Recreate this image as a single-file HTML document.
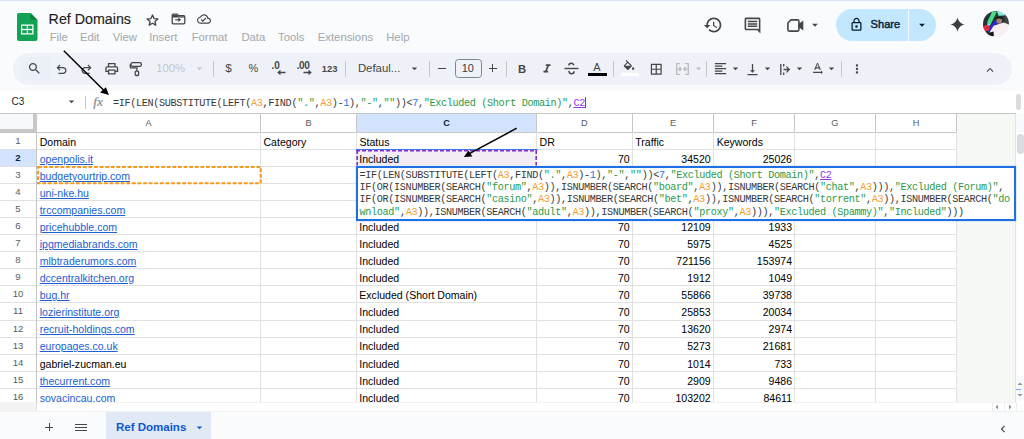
<!DOCTYPE html><html><head><meta charset="utf-8"><style>
html,body{margin:0;padding:0}
body{width:1024px;height:439px;overflow:hidden;position:relative;background:#f9fbfd;font-family:"Liberation Sans",sans-serif}
.t{position:absolute;white-space:pre}
.r{position:absolute}
.i{position:absolute;overflow:visible}
</style></head><body>
<div class="r" style="left:0px;top:0px;width:1024px;height:1px;background:#dde5f7;"></div>
<div class="r" style="left:0px;top:1px;width:1024px;height:1px;background:#f0f4fb;"></div>
<svg class="i" style="left:17px;top:13px;width:20.5px;height:28px" viewBox="0 0 41 56">
<path d="M3 0H27L41 14V52Q41 56 37 56H4Q0 56 0 52V4Q0 0 3 0Z" fill="#12a454"/>
<path d="M27 0L41 14H31Q27 14 27 10Z" fill="#0d8446"/>
<rect x="8" y="23" width="25" height="20" fill="#fff"/>
<rect x="10.5" y="25.5" width="9" height="6.2" fill="#12a454"/>
<rect x="21.5" y="25.5" width="9" height="6.2" fill="#12a454"/>
<rect x="10.5" y="34.3" width="9" height="6.2" fill="#12a454"/>
<rect x="21.5" y="34.3" width="9" height="6.2" fill="#12a454"/>
</svg>
<div class="t" style="left:48.60px;top:12.04px;font-size:14.25px;line-height:14.25px;color:#1f1f1f;font-weight:400;font-family:'Liberation Sans', sans-serif;-webkit-text-stroke:0.15px #1f1f1f">Ref Domains</div>
<svg class="i" style="left:146.4px;top:13.6px;width:13px;height:12.5px" viewBox="0 0 13 12.5"><path d="M6.50 1.0 L8.05 4.55 L11.85 4.9 L8.95 7.45 L9.8 11.2 L6.50 9.25 L3.2 11.2 L4.05 7.45 L1.15 4.9 L4.95 4.55Z" fill="none" stroke="#444746" stroke-width="1.35" stroke-linejoin="round"/></svg>
<svg class="i" style="left:172px;top:14.2px;width:13px;height:10px" viewBox="0 0 13 10"><path d="M1.3 0.2H5.2L6.6 1.6H11.8Q12.8 1.6 12.8 2.6V8.7Q12.8 9.8 11.7 9.8H1.3Q0.2 9.8 0.2 8.7V1.3Q0.2 0.2 1.3 0.2Z" fill="none" stroke="#444746" stroke-width="1.3"/><path d="M0.5 0.8H5L6.3 2.3H12.5V3.4H0.5Z" fill="#444746"/><path d="M3.3 5.2H6.8V6.4H3.3Z" fill="#444746"/><path d="M6.3 3.6L9.2 5.8L6.3 8Z" fill="#444746"/></svg>
<svg class="i" style="left:197.00px;top:12.40px;width:14px;height:14px" viewBox="0 0 24 24" fill="#444746"><path d="M19.35 10.04C18.67 6.59 15.64 4 12 4 9.11 4 6.6 5.64 5.35 8.04 2.34 8.36 0 10.910 0 14c0 3.31 2.69 6 6 6h13c2.76 0 5-2.24 5-5 0-2.64-2.05-4.780-4.65-4.96zM19 18H6c-2.21 0-4-1.79-4-4 0-2.05 1.53-3.76 3.56-3.97l1.07-.11.5-.95C8.08 7.14 9.94 6 12 6c2.62 0 4.88 1.86 5.39 4.430l.3 1.5 1.53.11c1.56.1 2.78 1.41 2.78 2.96 0 1.65-1.350 3-3 3zm-9-3.82l-2.09-2.09L6.5 13.5 10 17l6.01-6.01-1.41-1.41z" /></svg>
<div class="t" style="left:49.70px;top:31.53px;font-size:11.3px;line-height:11.3px;color:#a3a7ab;font-weight:400;font-family:'Liberation Sans', sans-serif;">File</div>
<div class="t" style="left:80.00px;top:31.53px;font-size:11.3px;line-height:11.3px;color:#a3a7ab;font-weight:400;font-family:'Liberation Sans', sans-serif;">Edit</div>
<div class="t" style="left:112.70px;top:31.53px;font-size:11.3px;line-height:11.3px;color:#a3a7ab;font-weight:400;font-family:'Liberation Sans', sans-serif;">View</div>
<div class="t" style="left:149.20px;top:31.53px;font-size:11.3px;line-height:11.3px;color:#a3a7ab;font-weight:400;font-family:'Liberation Sans', sans-serif;">Insert</div>
<div class="t" style="left:191.70px;top:31.53px;font-size:11.3px;line-height:11.3px;color:#a3a7ab;font-weight:400;font-family:'Liberation Sans', sans-serif;">Format</div>
<div class="t" style="left:241.40px;top:31.53px;font-size:11.3px;line-height:11.3px;color:#a3a7ab;font-weight:400;font-family:'Liberation Sans', sans-serif;">Data</div>
<div class="t" style="left:278.00px;top:31.53px;font-size:11.3px;line-height:11.3px;color:#a3a7ab;font-weight:400;font-family:'Liberation Sans', sans-serif;">Tools</div>
<div class="t" style="left:317.80px;top:31.53px;font-size:11.3px;line-height:11.3px;color:#a3a7ab;font-weight:400;font-family:'Liberation Sans', sans-serif;">Extensions</div>
<div class="t" style="left:386.20px;top:31.53px;font-size:11.3px;line-height:11.3px;color:#a3a7ab;font-weight:400;font-family:'Liberation Sans', sans-serif;">Help</div>
<svg class="i" style="left:702.70px;top:14.50px;width:20px;height:20px" viewBox="0 0 24 24" fill="#444746"><path d="M13 3c-4.97 0-9 4.03-9 9H1l3.89 3.89.07.14L9 12H6c0-3.87 3.13-7 7-7s7 3.13 7 7-3.13 7-7 7c-1.93 0-3.68-.79-4.94-2.06l-1.42 1.42C8.27 19.99 10.51 21 13 21c4.97 0 9-4.03 9-9s-4.03-9-9-9zm-1 5v5l4.28 2.54.72-1.21-3.5-2.08V8H12z" /></svg>
<svg class="i" style="left:742.70px;top:16.00px;width:19px;height:19px" viewBox="0 0 24 24" fill="#444746"><path d="M21.99 4c0-1.1-.89-2-1.99-2H4c-1.1 0-2 .9-2 2v12c0 1.1.9 2 2 2h14l4 4-.01-18zM20 4v13.17L18.83 16H4V4h16zM6 12h12v2H6zm0-3h12v2H6zm0-3h12v2H6z" /></svg>
<svg class="i" style="left:786.5px;top:18.5px;width:17px;height:13px" viewBox="0 0 17 13"><path d="M4 0.9H10.6Q11.9 0.9 11.9 2.2V10.8Q11.9 12.1 10.6 12.1H2.2Q0.9 12.1 0.9 10.8V4Z" fill="none" stroke="#444746" stroke-width="1.6" stroke-linejoin="round"/><path d="M11.5 5L16.3 1.5V11.5L11.5 8Z" fill="#444746"/></svg>
<svg class="i" style="left:807.80px;top:17.80px;width:14px;height:14px" viewBox="0 0 24 24" fill="#444746"><path d="M7 10l5 5 5-5z" /></svg>
<div class="r" style="left:836px;top:8.5px;width:99.5px;height:32px;border-radius:16px;background:#c2e7ff"></div>
<div class="r" style="left:908.3px;top:8.5px;width:1px;height:32px;background:#f2f9ff;"></div>
<svg class="i" style="left:849.10px;top:16.70px;width:15px;height:15px" viewBox="0 0 24 24" fill="#001d35"><path d="M18 8h-1V6c0-2.76-2.24-5-5-5S7 3.24 7 6v2H6c-1.1 0-2 .9-2 2v10c0 1.1.9 2 2 2h12c1.1 0 2-.9 2-2V10c0-1.1-.9-2-2-2zM9 6c0-1.66 1.34-3 3-3s3 1.34 3 3v2H9V6zm9 14H6V10h12v10zm-6-3c1.1 0 2-.9 2-2s-.9-2-2-2-2 .9-2 2 .9 2 2 2z" /></svg>
<div class="t" style="left:870.60px;top:19.40px;font-size:11.1px;line-height:11.1px;color:#0a2540;font-weight:400;font-family:'Liberation Sans', sans-serif;-webkit-text-stroke:0.45px #0a2540">Share</div>
<svg class="i" style="left:915.00px;top:17.80px;width:14px;height:14px" viewBox="0 0 24 24" fill="#001d35"><path d="M7 10l5 5 5-5z" /></svg>
<svg class="i" style="left:949.40px;top:15.80px;width:17px;height:17px" viewBox="0 0 24 24" fill="#3d3f42"><path d="M12 1.5C12.6 7 17 11.4 22.5 12 17 12.6 12.6 17 12 22.5 11.4 17 7 12.6 1.5 12 7 11.4 11.4 7 12 1.5Z" /></svg>
<svg class="i" style="left:983.3px;top:11.3px;width:26px;height:26px" viewBox="0 0 26 26">
<defs><clipPath id="av"><circle cx="13" cy="13" r="13"/></clipPath><filter id="bl"><feGaussianBlur stdDeviation="0.45"/></filter></defs>
<g clip-path="url(#av)"><g filter="url(#bl)">
<rect x="-2" y="-2" width="30" height="30" fill="#263030"/>
<path d="M9.2 0.6 L14 0.6 L7.4 14 L4 11.5Z" fill="#48dc86"/>
<path d="M14 0 L21 0.5 L22 4.5 L15.5 4.8Z" fill="#86ecd8"/>
<path d="M12.3 8.8 L15.4 11 L8 21 L3.2 20.2Z" fill="#2b2bd6"/>
<path d="M5 11.5 L7.2 13.6 L4.3 18.4 L3 17Z" fill="#9fd8ff"/>
<rect x="21.5" y="5" width="6" height="12" fill="#3f4244"/>
<circle cx="3.6" cy="17" r="3.1" fill="#e42a3a"/>
<ellipse cx="16.2" cy="9.2" rx="2.8" ry="3.5" fill="#a98068"/>
<path d="M13.2 6.8 Q16 4.2 19.3 6.6 L19 8.3 Q16.2 6.8 13.5 8.6Z" fill="#1a1a1a"/>
<path d="M10.6 14.8 L20.8 11.4 L27 14 L27 27 L8 27 L6.8 21Z" fill="#f8eff3"/>
<path d="M7 21.4 L10.6 20.6 L10.8 25.5 L6.8 24.6Z" fill="#12141a"/>
</g></g></svg>
<div class="r" style="left:12.8px;top:52.6px;width:999px;height:32.2px;border-radius:16px;background:#eef2f8"></div>
<div class="r" style="left:20.5px;top:56.6px;width:29.7px;height:23px;background:#eaeff8;border-radius:2px"></div>
<svg class="i" style="left:27.30px;top:61.00px;width:15px;height:15px" viewBox="0 0 24 24" fill="#444746"><path d="M15.5 14h-.79l-.28-.27C15.41 12.59 16 11.11 16 9.5 16 5.91 13.09 3 9.5 3S3 5.91 3 9.5 5.91 16 9.5 16c1.61 0 3.09-.59 4.23-1.57l.27.28v.79l5 4.99L20.49 19l-4.99-5zm-6 0C7.01 14 5 11.99 5 9.5S7.01 5 9.5 5 14 7.01 14 9.5 11.99 14 9.5 14z" /></svg>
<svg class="i" style="left:54.00px;top:61.90px;width:15px;height:15px" viewBox="0 -960 960 960" fill="#444746"><path d="M280-200v-80h284q63 0 109.5-40T720-420q0-60-46.5-100T564-560H312l104 104-56 56-200-200 200-200 56 56-104 104h252q97 0 166.5 63T800-420q0 94-69.5 157T564-200H280Z" /></svg>
<svg class="i" style="left:79px;top:61.9px;width:15px;height:15px" viewBox="0 -960 960 960" fill="#444746"><g transform="translate(960 0) scale(-1 1)"><path d="M280-200v-80h284q63 0 109.5-40T720-420q0-60-46.5-100T564-560H312l104 104-56 56-200-200 200-200 56 56-104 104h252q97 0 166.5 63T800-420q0 94-69.5 157T564-200H280Z"/></g></svg>
<svg class="i" style="left:103.75px;top:60.75px;width:15.5px;height:15.5px" viewBox="0 0 24 24" fill="#444746"><path d="M19 8h-1V3H6v5H5c-1.66 0-3 1.34-3 3v6h4v4h12v-4h4v-6c0-1.66-1.34-3-3-3zM8 5h8v3H8V5zm8 12v2H8v-4h8v2zm2-2v-2H6v2H4v-4c0-.55.45-1 1-1h14c.55 0 1 .45 1 1v4h-2z" /></svg>
<svg class="i" style="left:128px;top:60px;width:16px;height:18px" viewBox="0 0 16 18" fill="none" stroke="#444746" stroke-width="1.3"><rect x="3" y="2.7" width="10.4" height="3.6" rx="1.6"/><path d="M3 4.5H2.6Q2.3 4.5 2.3 5V7.2Q2.3 7.8 2.9 7.8H8.9V11"/><rect x="7.2" y="11.1" width="3.4" height="4.4" rx="1"/></svg>
<div class="t" style="left:156.20px;top:63.33px;font-size:11.3px;line-height:11.3px;color:#c2c5c8;font-weight:400;font-family:'Liberation Sans', sans-serif;">100%</div>
<svg class="i" style="left:193.00px;top:61.80px;width:13px;height:13px" viewBox="0 0 24 24" fill="#c2c5c8"><path d="M7 10l5 5 5-5z" /></svg>
<div class="r" style="left:213.1px;top:61px;width:1px;height:15.5px;background:#c7c9cc;"></div>
<div class="r" style="left:345.0px;top:61px;width:1px;height:15.5px;background:#c7c9cc;"></div>
<div class="r" style="left:429.0px;top:61px;width:1px;height:15.5px;background:#c7c9cc;"></div>
<div class="r" style="left:506.3px;top:61px;width:1px;height:15.5px;background:#c7c9cc;"></div>
<div class="r" style="left:613.2px;top:61px;width:1px;height:15.5px;background:#c7c9cc;"></div>
<div class="r" style="left:705.9px;top:61px;width:1px;height:15.5px;background:#c7c9cc;"></div>
<div class="r" style="left:840.8px;top:61px;width:1px;height:15.5px;background:#c7c9cc;"></div>
<div class="t" style="left:225.20px;top:62.61px;font-size:11.8px;line-height:11.8px;color:#444746;font-weight:400;font-family:'Liberation Sans', sans-serif;">$</div>
<div class="t" style="left:248.60px;top:63.29px;font-size:11.0px;line-height:11.0px;color:#444746;font-weight:400;font-family:'Liberation Sans', sans-serif;">%</div>
<div class="t" style="left:271.60px;top:61.13px;font-size:10.0px;line-height:10.0px;color:#444746;font-weight:700;font-family:'Liberation Sans', sans-serif;">.0</div>
<svg class="i" style="left:277px;top:70.3px;width:9px;height:5px" viewBox="0 0 9 5"><path d="M8.5 2.5H1.5M3.5 0.5L1.2 2.5 3.5 4.5" stroke="#444746" stroke-width="1.3" fill="none"/></svg>
<div class="t" style="left:296.80px;top:61.13px;font-size:10.0px;line-height:10.0px;color:#444746;font-weight:700;font-family:'Liberation Sans', sans-serif;letter-spacing:-0.5px">.00</div>
<svg class="i" style="left:302.5px;top:70.3px;width:9px;height:5px" viewBox="0 0 9 5"><path d="M0.5 2.5H7.5M5.5 0.5L7.8 2.5 5.5 4.5" stroke="#444746" stroke-width="1.3" fill="none"/></svg>
<div class="t" style="left:321.80px;top:64.04px;font-size:9.4px;line-height:9.4px;color:#444746;font-weight:700;font-family:'Liberation Sans', sans-serif;">123</div>
<div class="t" style="left:357.90px;top:63.05px;font-size:11.4px;line-height:11.4px;color:#444746;font-weight:400;font-family:'Liberation Sans', sans-serif;">Defaul...</div>
<svg class="i" style="left:408.40px;top:61.80px;width:13px;height:13px" viewBox="0 0 24 24" fill="#444746"><path d="M7 10l5 5 5-5z" /></svg>
<div class="r" style="left:438px;top:67.6px;width:8.3px;height:1.3px;background:#444746;"></div>
<div class="r" style="left:455px;top:59.4px;width:24.6px;height:16.8px;border:1px solid #80868b;border-radius:3.5px"></div>
<div class="t" style="left:267.80px;width:400px;text-align:center;top:62.89px;font-size:11.0px;line-height:11.0px;color:#3c4043;font-weight:400;font-family:'Liberation Sans', sans-serif;">10</div>
<div class="r" style="left:488.7px;top:67.6px;width:8.3px;height:1.3px;background:#444746;"></div>
<div class="r" style="left:492.2px;top:64.1px;width:1.3px;height:8.3px;background:#444746;"></div>
<div class="t" style="left:518.00px;top:63.62px;font-size:11.2px;line-height:11.2px;color:#444746;font-weight:700;font-family:'Liberation Sans', sans-serif;">B</div>
<svg class="i" style="left:539.70px;top:61.50px;width:14px;height:14px" viewBox="0 0 24 24" fill="#444746"><path d="M10 4v3h2.21l-3.42 8H6v3h8v-3h-2.21l3.42-8H18V4z" /></svg>
<svg class="i" style="left:564px;top:62px;width:15px;height:13px" viewBox="0 0 15 13" fill="none" stroke="#444746" stroke-width="1.4">
<path d="M0.5 6.5H14.5"/><path d="M10 3.2Q9 1.2 7.4 1.2 4.8 1.2 4.8 3.4"/><path d="M4.8 8.8Q5.3 11.8 7.5 11.8 10.2 11.8 10.2 9.3"/></svg>
<div class="t" style="left:593.20px;top:61.89px;font-size:11.0px;line-height:11.0px;color:#444746;font-weight:400;font-family:'Liberation Sans', sans-serif;">A</div>
<div class="r" style="left:588.3px;top:73.1px;width:18.7px;height:2.9px;background:#000000;"></div>
<svg class="i" style="left:621.50px;top:60.30px;width:14px;height:14px" viewBox="0 0 24 24" fill="#444746"><path d="M16.56 8.94L7.62 0 6.21 1.41l2.38 2.38-5.15 5.15c-.59.59-.59 1.54 0 2.12l5.5 5.5c.29.29.68.44 1.06.44s.77-.15 1.06-.44l5.5-5.5c.59-.58.59-1.53 0-2.12zM5.21 10L10 5.21 14.79 10H5.21zM19 11.5s-2 2.17-2 3.5c0 1.1.9 2 2 2s2-.9 2-2c0-1.33-2-3.5-2-3.5z" /></svg>
<div class="r" style="left:620.5px;top:73.1px;width:18.5px;height:2.9px;background:#ffffff;"></div>
<svg class="i" style="left:648.75px;top:61.55px;width:14.5px;height:14.5px" viewBox="0 0 24 24" fill="#444746"><path d="M3 3v18h18V3H3zm8 16H5v-6h6v6zm0-8H5V5h6v6zm8 8h-6v-6h6v6zm0-8h-6V5h6v6z" /></svg>
<svg class="i" style="left:675.5px;top:63px;width:13px;height:12px" viewBox="0 0 13 12" fill="none" stroke="#b9bcbe" stroke-width="1.3">
<path d="M4 0.7H0.7V11.3H4M9 0.7H12.3V11.3H9"/><path d="M1.5 6H5M3.5 4L5.2 6 3.5 8M11.5 6H8M9.5 4L7.8 6 9.5 8"/></svg>
<svg class="i" style="left:692.00px;top:61.80px;width:13px;height:13px" viewBox="0 0 24 24" fill="#b9bcbe"><path d="M7 10l5 5 5-5z" /></svg>
<svg class="i" style="left:712.50px;top:61.40px;width:15px;height:15px" viewBox="0 0 24 24" fill="#444746"><path d="M15 15H3v2h12v-2zm0-8H3v2h12V7zM3 13h18v-2H3v2zm0 8h18v-2H3v2zM3 3v2h18V3H3z" /></svg>
<svg class="i" style="left:728.50px;top:61.80px;width:13px;height:13px" viewBox="0 0 24 24" fill="#444746"><path d="M7 10l5 5 5-5z" /></svg>
<svg class="i" style="left:745.30px;top:62.00px;width:15px;height:15px" viewBox="0 0 24 24" fill="#444746"><path d="M16 13h-3V3h-2v10H8l4 4 4-4zM4 19v2h16v-2H4z" /></svg>
<svg class="i" style="left:760.50px;top:61.80px;width:13px;height:13px" viewBox="0 0 24 24" fill="#444746"><path d="M7 10l5 5 5-5z" /></svg>
<svg class="i" style="left:779.5px;top:63.5px;width:10px;height:11px" viewBox="0 0 10 11" fill="none" stroke="#444746" stroke-width="1.3">
<path d="M0.8 0V11M3.5 5.5H9.2M6.5 2.6L9.3 5.5 6.5 8.4M3.7 0V2.5M3.7 8.5V11"/></svg>
<svg class="i" style="left:793.10px;top:61.80px;width:13px;height:13px" viewBox="0 0 24 24" fill="#444746"><path d="M7 10l5 5 5-5z" /></svg>
<svg class="i" style="left:810.20px;top:61.40px;width:15px;height:15px" viewBox="0 0 24 24" fill="#444746"><path d="M12.75 3h-1.5L6.5 14h2.1l.9-2.2h5l.9 2.2h2.1L12.75 3zm-2.62 7L12 4.98 13.87 10h-3.74zm10.37 8l-3-3v2H5v2h12.5v2l3-3z" /></svg>
<svg class="i" style="left:825.20px;top:61.80px;width:13px;height:13px" viewBox="0 0 24 24" fill="#444746"><path d="M7 10l5 5 5-5z" /></svg>
<svg class="i" style="left:849.70px;top:61.60px;width:14px;height:14px" viewBox="0 0 24 24" fill="#444746"><path d="M12 8c1.1 0 2-.9 2-2s-.9-2-2-2-2 .9-2 2 .9 2 2 2zm0 2c-1.1 0-2 .9-2 2s.9 2 2 2 2-.9 2-2-.9-2-2-2zm0 6c-1.1 0-2 .9-2 2s.9 2 2 2 2-.9 2-2-.9-2-2-2z" /></svg>
<svg class="i" style="left:983.20px;top:62.50px;width:14px;height:14px" viewBox="0 0 24 24" fill="#444746"><path d="M12 8l-6 6 1.41 1.41L12 10.83l4.59 4.58L18 14z" /></svg>
<div class="r" style="left:0px;top:91px;width:1024px;height:22px;background:#ffffff;"></div>
<div class="t" style="left:11.40px;top:97.05px;font-size:10.1px;line-height:10.1px;color:#1f1f1f;font-weight:400;font-family:'Liberation Sans', sans-serif;">C3</div>
<svg class="i" style="left:65.40px;top:95.30px;width:13px;height:13px" viewBox="0 0 24 24" fill="#444746"><path d="M7 10l5 5 5-5z" /></svg>
<div class="r" style="left:84.5px;top:96.3px;width:1px;height:12.7px;background:#c7c9cc;"></div>
<div class="t" style="left:93.30px;top:95.17px;font-size:13.5px;line-height:13.5px;color:#85898d;font-weight:400;font-family:'Liberation Serif', serif;-webkit-text-stroke:0.2px #85898d;font-style:italic">fx</div>
<div class="r" style="left:1016px;top:94.4px;width:5px;height:16px;border-radius:3px;background:#dadce0"></div>
<div class="t" style="left:113.00px;top:98.68px;font-size:10.2px;line-height:10.2px;color:#37393b;font-weight:400;font-family:'Liberation Mono', monospace;letter-spacing:-0.360px"><span style="color:#37393b">=IF(LEN(SUBSTITUTE(LEFT(</span><span style="color:#f59e31">A3</span><span style="color:#37393b">,FIND(</span><span style="color:#2a9a48">"."</span><span style="color:#37393b">,</span><span style="color:#f59e31">A3</span><span style="color:#37393b">)-</span><span style="color:#1a73e8">1</span><span style="color:#37393b">),</span><span style="color:#2a9a48">"-"</span><span style="color:#37393b">,</span><span style="color:#2a9a48">""</span><span style="color:#37393b">))&lt;</span><span style="color:#1a73e8">7</span><span style="color:#37393b">,</span><span style="color:#2a9a48">"Excluded (Short Domain)"</span><span style="color:#37393b">,</span><span style="color:#9334e6;text-decoration:underline">C2</span></div>
<div class="r" style="left:585px;top:97px;width:1px;height:11px;background:#7a2fc0;"></div>
<div class="r" style="left:0px;top:113px;width:1016px;height:289px;background:#ffffff;"></div>
<div class="r" style="left:956.5px;top:113px;width:58.5px;height:289px;background:#f6f8f6;"></div>
<div class="r" style="left:1015px;top:113px;width:1px;height:289px;background:#e3e3e3;"></div>
<div class="r" style="left:1016.5px;top:113px;width:7.5px;height:299px;background:#ffffff;"></div>
<div class="r" style="left:1016.5px;top:113px;width:7.5px;height:19px;background:#f8f9fa;"></div>
<div class="r" style="left:0px;top:113px;width:36.5px;height:19px;background:#f8f9fa;"></div>
<div class="r" style="left:356.5px;top:113px;width:180px;height:19px;background:#d3e3fd;"></div>
<div class="r" style="left:0px;top:149.35000000000002px;width:36.5px;height:17.07px;background:#d3e3fd;"></div>
<div class="t" style="left:-51.50px;width:400px;text-align:center;top:118.61px;font-size:9.2px;line-height:9.2px;color:#575b5f;font-weight:400;font-family:'Liberation Sans', sans-serif;">A</div>
<div class="t" style="left:108.50px;width:400px;text-align:center;top:118.61px;font-size:9.2px;line-height:9.2px;color:#575b5f;font-weight:400;font-family:'Liberation Sans', sans-serif;">B</div>
<div class="t" style="left:246.55px;width:400px;text-align:center;top:118.61px;font-size:9.2px;line-height:9.2px;color:#041e49;font-weight:700;font-family:'Liberation Sans', sans-serif;">C</div>
<div class="t" style="left:384.45px;width:400px;text-align:center;top:118.61px;font-size:9.2px;line-height:9.2px;color:#575b5f;font-weight:400;font-family:'Liberation Sans', sans-serif;">D</div>
<div class="t" style="left:473.00px;width:400px;text-align:center;top:118.61px;font-size:9.2px;line-height:9.2px;color:#575b5f;font-weight:400;font-family:'Liberation Sans', sans-serif;">E</div>
<div class="t" style="left:554.05px;width:400px;text-align:center;top:118.61px;font-size:9.2px;line-height:9.2px;color:#575b5f;font-weight:400;font-family:'Liberation Sans', sans-serif;">F</div>
<div class="t" style="left:634.95px;width:400px;text-align:center;top:118.61px;font-size:9.2px;line-height:9.2px;color:#575b5f;font-weight:400;font-family:'Liberation Sans', sans-serif;">G</div>
<div class="t" style="left:716.05px;width:400px;text-align:center;top:118.61px;font-size:9.2px;line-height:9.2px;color:#575b5f;font-weight:400;font-family:'Liberation Sans', sans-serif;">H</div>
<div class="r" style="left:0px;top:113px;width:1016px;height:1px;background:#c4c7c5;"></div>
<div class="r" style="left:0px;top:132px;width:956.6px;height:1px;background:#c4c7c5;"></div>
<div class="r" style="left:36.5px;top:149px;width:920px;height:1px;background:#e1e1e1;"></div>
<div class="r" style="left:0px;top:149px;width:36.5px;height:1px;background:#e1e1e1;"></div>
<div class="r" style="left:36.5px;top:166px;width:920px;height:1px;background:#e1e1e1;"></div>
<div class="r" style="left:0px;top:166px;width:36.5px;height:1px;background:#e1e1e1;"></div>
<div class="r" style="left:36.5px;top:183px;width:920px;height:1px;background:#e1e1e1;"></div>
<div class="r" style="left:0px;top:183px;width:36.5px;height:1px;background:#e1e1e1;"></div>
<div class="r" style="left:36.5px;top:200px;width:920px;height:1px;background:#e1e1e1;"></div>
<div class="r" style="left:0px;top:200px;width:36.5px;height:1px;background:#e1e1e1;"></div>
<div class="r" style="left:36.5px;top:217px;width:920px;height:1px;background:#e1e1e1;"></div>
<div class="r" style="left:0px;top:217px;width:36.5px;height:1px;background:#e1e1e1;"></div>
<div class="r" style="left:36.5px;top:234px;width:920px;height:1px;background:#e1e1e1;"></div>
<div class="r" style="left:0px;top:234px;width:36.5px;height:1px;background:#e1e1e1;"></div>
<div class="r" style="left:36.5px;top:251px;width:920px;height:1px;background:#e1e1e1;"></div>
<div class="r" style="left:0px;top:251px;width:36.5px;height:1px;background:#e1e1e1;"></div>
<div class="r" style="left:36.5px;top:268px;width:920px;height:1px;background:#e1e1e1;"></div>
<div class="r" style="left:0px;top:268px;width:36.5px;height:1px;background:#e1e1e1;"></div>
<div class="r" style="left:36.5px;top:285px;width:920px;height:1px;background:#e1e1e1;"></div>
<div class="r" style="left:0px;top:285px;width:36.5px;height:1px;background:#e1e1e1;"></div>
<div class="r" style="left:36.5px;top:302px;width:920px;height:1px;background:#e1e1e1;"></div>
<div class="r" style="left:0px;top:302px;width:36.5px;height:1px;background:#e1e1e1;"></div>
<div class="r" style="left:36.5px;top:320px;width:920px;height:1px;background:#e1e1e1;"></div>
<div class="r" style="left:0px;top:320px;width:36.5px;height:1px;background:#e1e1e1;"></div>
<div class="r" style="left:36.5px;top:337px;width:920px;height:1px;background:#e1e1e1;"></div>
<div class="r" style="left:0px;top:337px;width:36.5px;height:1px;background:#e1e1e1;"></div>
<div class="r" style="left:36.5px;top:354px;width:920px;height:1px;background:#e1e1e1;"></div>
<div class="r" style="left:0px;top:354px;width:36.5px;height:1px;background:#e1e1e1;"></div>
<div class="r" style="left:36.5px;top:371px;width:920px;height:1px;background:#e1e1e1;"></div>
<div class="r" style="left:0px;top:371px;width:36.5px;height:1px;background:#e1e1e1;"></div>
<div class="r" style="left:36.5px;top:388px;width:920px;height:1px;background:#e1e1e1;"></div>
<div class="r" style="left:0px;top:388px;width:36.5px;height:1px;background:#e1e1e1;"></div>
<div class="r" style="left:260px;top:113px;width:1px;height:19px;background:#c4c7c5;"></div>
<div class="r" style="left:260px;top:132px;width:1px;height:270px;background:#e1e1e1;"></div>
<div class="r" style="left:356px;top:113px;width:1px;height:19px;background:#c4c7c5;"></div>
<div class="r" style="left:356px;top:132px;width:1px;height:270px;background:#e1e1e1;"></div>
<div class="r" style="left:536px;top:113px;width:1px;height:19px;background:#c4c7c5;"></div>
<div class="r" style="left:536px;top:132px;width:1px;height:270px;background:#e1e1e1;"></div>
<div class="r" style="left:632px;top:113px;width:1px;height:19px;background:#c4c7c5;"></div>
<div class="r" style="left:632px;top:132px;width:1px;height:270px;background:#e1e1e1;"></div>
<div class="r" style="left:713px;top:113px;width:1px;height:19px;background:#c4c7c5;"></div>
<div class="r" style="left:713px;top:132px;width:1px;height:270px;background:#e1e1e1;"></div>
<div class="r" style="left:794px;top:113px;width:1px;height:19px;background:#c4c7c5;"></div>
<div class="r" style="left:794px;top:132px;width:1px;height:270px;background:#e1e1e1;"></div>
<div class="r" style="left:875px;top:113px;width:1px;height:19px;background:#c4c7c5;"></div>
<div class="r" style="left:875px;top:132px;width:1px;height:270px;background:#e1e1e1;"></div>
<div class="r" style="left:956px;top:113px;width:1px;height:19px;background:#c4c7c5;"></div>
<div class="r" style="left:956px;top:132px;width:1px;height:270px;background:#e1e1e1;"></div>
<div class="r" style="left:36px;top:113px;width:1px;height:289px;background:#c4c7c5;"></div>
<div class="r" style="left:33px;top:113px;width:4px;height:19px;background:#c7c7c7;"></div>
<div class="r" style="left:0px;top:128.6px;width:37px;height:3.7px;background:#c7c7c7;"></div>
<div class="t" style="left:-182.00px;width:400px;text-align:center;top:135.97px;font-size:9.6px;line-height:9.6px;color:#575b5f;font-weight:400;font-family:'Liberation Sans', sans-serif;">1</div>
<div class="t" style="left:-182.00px;width:400px;text-align:center;top:153.02px;font-size:9.6px;line-height:9.6px;color:#041e49;font-weight:700;font-family:'Liberation Sans', sans-serif;">2</div>
<div class="t" style="left:-182.00px;width:400px;text-align:center;top:170.07px;font-size:9.6px;line-height:9.6px;color:#575b5f;font-weight:400;font-family:'Liberation Sans', sans-serif;">3</div>
<div class="t" style="left:-182.00px;width:400px;text-align:center;top:187.12px;font-size:9.6px;line-height:9.6px;color:#575b5f;font-weight:400;font-family:'Liberation Sans', sans-serif;">4</div>
<div class="t" style="left:-182.00px;width:400px;text-align:center;top:204.17px;font-size:9.6px;line-height:9.6px;color:#575b5f;font-weight:400;font-family:'Liberation Sans', sans-serif;">5</div>
<div class="t" style="left:-182.00px;width:400px;text-align:center;top:221.22px;font-size:9.6px;line-height:9.6px;color:#575b5f;font-weight:400;font-family:'Liberation Sans', sans-serif;">6</div>
<div class="t" style="left:-182.00px;width:400px;text-align:center;top:238.27px;font-size:9.6px;line-height:9.6px;color:#575b5f;font-weight:400;font-family:'Liberation Sans', sans-serif;">7</div>
<div class="t" style="left:-182.00px;width:400px;text-align:center;top:255.32px;font-size:9.6px;line-height:9.6px;color:#575b5f;font-weight:400;font-family:'Liberation Sans', sans-serif;">8</div>
<div class="t" style="left:-182.00px;width:400px;text-align:center;top:272.37px;font-size:9.6px;line-height:9.6px;color:#575b5f;font-weight:400;font-family:'Liberation Sans', sans-serif;">9</div>
<div class="t" style="left:-182.00px;width:400px;text-align:center;top:289.42px;font-size:9.6px;line-height:9.6px;color:#575b5f;font-weight:400;font-family:'Liberation Sans', sans-serif;">10</div>
<div class="t" style="left:-182.00px;width:400px;text-align:center;top:306.47px;font-size:9.6px;line-height:9.6px;color:#575b5f;font-weight:400;font-family:'Liberation Sans', sans-serif;">11</div>
<div class="t" style="left:-182.00px;width:400px;text-align:center;top:323.52px;font-size:9.6px;line-height:9.6px;color:#575b5f;font-weight:400;font-family:'Liberation Sans', sans-serif;">12</div>
<div class="t" style="left:-182.00px;width:400px;text-align:center;top:340.57px;font-size:9.6px;line-height:9.6px;color:#575b5f;font-weight:400;font-family:'Liberation Sans', sans-serif;">13</div>
<div class="t" style="left:-182.00px;width:400px;text-align:center;top:357.62px;font-size:9.6px;line-height:9.6px;color:#575b5f;font-weight:400;font-family:'Liberation Sans', sans-serif;">14</div>
<div class="t" style="left:-182.00px;width:400px;text-align:center;top:374.67px;font-size:9.6px;line-height:9.6px;color:#575b5f;font-weight:400;font-family:'Liberation Sans', sans-serif;">15</div>
<div class="t" style="left:-182.00px;width:400px;text-align:center;top:391.72px;font-size:9.6px;line-height:9.6px;color:#575b5f;font-weight:400;font-family:'Liberation Sans', sans-serif;">16</div>
<div class="r" style="left:356.5px;top:149.3px;width:180.5px;height:15.8px;background:#f3ecf5;"></div>
<div class="t" style="left:39.70px;top:136.87px;font-size:10.55px;line-height:10.55px;color:#000;font-weight:400;font-family:'Liberation Sans', sans-serif;">Domain</div>
<div class="t" style="left:263.50px;top:136.87px;font-size:10.55px;line-height:10.55px;color:#000;font-weight:400;font-family:'Liberation Sans', sans-serif;">Category</div>
<div class="t" style="left:359.50px;top:136.87px;font-size:10.55px;line-height:10.55px;color:#000;font-weight:400;font-family:'Liberation Sans', sans-serif;">Status</div>
<div class="t" style="left:539.60px;top:136.87px;font-size:10.55px;line-height:10.55px;color:#000;font-weight:400;font-family:'Liberation Sans', sans-serif;">DR</div>
<div class="t" style="left:635.30px;top:136.87px;font-size:10.55px;line-height:10.55px;color:#000;font-weight:400;font-family:'Liberation Sans', sans-serif;">Traffic</div>
<div class="t" style="left:716.70px;top:136.87px;font-size:10.55px;line-height:10.55px;color:#000;font-weight:400;font-family:'Liberation Sans', sans-serif;">Keywords</div>
<div class="t" style="left:39.70px;top:153.92px;font-size:10.55px;line-height:10.55px;color:#2160d2;font-weight:400;font-family:'Liberation Sans', sans-serif;text-decoration:underline;text-underline-offset:1.3px">openpolis.it</div>
<div class="t" style="left:359.30px;top:153.92px;font-size:10.55px;line-height:10.55px;color:#000;font-weight:400;font-family:'Liberation Sans', sans-serif;">Included</div>
<div class="t" style="right:394.30px;top:153.92px;font-size:10.55px;line-height:10.55px;color:#000;font-weight:400;font-family:'Liberation Sans', sans-serif;">70</div>
<div class="t" style="right:313.30px;top:153.92px;font-size:10.55px;line-height:10.55px;color:#000;font-weight:400;font-family:'Liberation Sans', sans-serif;">34520</div>
<div class="t" style="right:232.00px;top:153.92px;font-size:10.55px;line-height:10.55px;color:#000;font-weight:400;font-family:'Liberation Sans', sans-serif;">25026</div>
<div class="t" style="left:39.70px;top:170.97px;font-size:10.55px;line-height:10.55px;color:#2160d2;font-weight:400;font-family:'Liberation Sans', sans-serif;text-decoration:underline;text-underline-offset:1.3px">budgetyourtrip.com</div>
<div class="t" style="left:39.70px;top:188.02px;font-size:10.55px;line-height:10.55px;color:#2160d2;font-weight:400;font-family:'Liberation Sans', sans-serif;text-decoration:underline;text-underline-offset:1.3px">uni-nke.hu</div>
<div class="t" style="left:39.70px;top:205.07px;font-size:10.55px;line-height:10.55px;color:#2160d2;font-weight:400;font-family:'Liberation Sans', sans-serif;text-decoration:underline;text-underline-offset:1.3px">trccompanies.com</div>
<div class="t" style="left:39.70px;top:222.12px;font-size:10.55px;line-height:10.55px;color:#2160d2;font-weight:400;font-family:'Liberation Sans', sans-serif;text-decoration:underline;text-underline-offset:1.3px">pricehubble.com</div>
<div class="t" style="left:359.30px;top:222.12px;font-size:10.55px;line-height:10.55px;color:#000;font-weight:400;font-family:'Liberation Sans', sans-serif;">Included</div>
<div class="t" style="right:394.30px;top:222.12px;font-size:10.55px;line-height:10.55px;color:#000;font-weight:400;font-family:'Liberation Sans', sans-serif;">70</div>
<div class="t" style="right:313.30px;top:222.12px;font-size:10.55px;line-height:10.55px;color:#000;font-weight:400;font-family:'Liberation Sans', sans-serif;">12109</div>
<div class="t" style="right:232.00px;top:222.12px;font-size:10.55px;line-height:10.55px;color:#000;font-weight:400;font-family:'Liberation Sans', sans-serif;">1933</div>
<div class="t" style="left:39.70px;top:239.17px;font-size:10.55px;line-height:10.55px;color:#2160d2;font-weight:400;font-family:'Liberation Sans', sans-serif;text-decoration:underline;text-underline-offset:1.3px">ipgmediabrands.com</div>
<div class="t" style="left:359.30px;top:239.17px;font-size:10.55px;line-height:10.55px;color:#000;font-weight:400;font-family:'Liberation Sans', sans-serif;">Included</div>
<div class="t" style="right:394.30px;top:239.17px;font-size:10.55px;line-height:10.55px;color:#000;font-weight:400;font-family:'Liberation Sans', sans-serif;">70</div>
<div class="t" style="right:313.30px;top:239.17px;font-size:10.55px;line-height:10.55px;color:#000;font-weight:400;font-family:'Liberation Sans', sans-serif;">5975</div>
<div class="t" style="right:232.00px;top:239.17px;font-size:10.55px;line-height:10.55px;color:#000;font-weight:400;font-family:'Liberation Sans', sans-serif;">4525</div>
<div class="t" style="left:39.70px;top:256.22px;font-size:10.55px;line-height:10.55px;color:#2160d2;font-weight:400;font-family:'Liberation Sans', sans-serif;text-decoration:underline;text-underline-offset:1.3px">mlbtraderumors.com</div>
<div class="t" style="left:359.30px;top:256.22px;font-size:10.55px;line-height:10.55px;color:#000;font-weight:400;font-family:'Liberation Sans', sans-serif;">Included</div>
<div class="t" style="right:394.30px;top:256.22px;font-size:10.55px;line-height:10.55px;color:#000;font-weight:400;font-family:'Liberation Sans', sans-serif;">70</div>
<div class="t" style="right:313.30px;top:256.22px;font-size:10.55px;line-height:10.55px;color:#000;font-weight:400;font-family:'Liberation Sans', sans-serif;">721156</div>
<div class="t" style="right:232.00px;top:256.22px;font-size:10.55px;line-height:10.55px;color:#000;font-weight:400;font-family:'Liberation Sans', sans-serif;">153974</div>
<div class="t" style="left:39.70px;top:273.27px;font-size:10.55px;line-height:10.55px;color:#2160d2;font-weight:400;font-family:'Liberation Sans', sans-serif;text-decoration:underline;text-underline-offset:1.3px">dccentralkitchen.org</div>
<div class="t" style="left:359.30px;top:273.27px;font-size:10.55px;line-height:10.55px;color:#000;font-weight:400;font-family:'Liberation Sans', sans-serif;">Included</div>
<div class="t" style="right:394.30px;top:273.27px;font-size:10.55px;line-height:10.55px;color:#000;font-weight:400;font-family:'Liberation Sans', sans-serif;">70</div>
<div class="t" style="right:313.30px;top:273.27px;font-size:10.55px;line-height:10.55px;color:#000;font-weight:400;font-family:'Liberation Sans', sans-serif;">1912</div>
<div class="t" style="right:232.00px;top:273.27px;font-size:10.55px;line-height:10.55px;color:#000;font-weight:400;font-family:'Liberation Sans', sans-serif;">1049</div>
<div class="t" style="left:39.70px;top:290.32px;font-size:10.55px;line-height:10.55px;color:#2160d2;font-weight:400;font-family:'Liberation Sans', sans-serif;text-decoration:underline;text-underline-offset:1.3px">bug.hr</div>
<div class="t" style="left:359.30px;top:290.32px;font-size:10.55px;line-height:10.55px;color:#000;font-weight:400;font-family:'Liberation Sans', sans-serif;">Excluded (Short Domain)</div>
<div class="t" style="right:394.30px;top:290.32px;font-size:10.55px;line-height:10.55px;color:#000;font-weight:400;font-family:'Liberation Sans', sans-serif;">70</div>
<div class="t" style="right:313.30px;top:290.32px;font-size:10.55px;line-height:10.55px;color:#000;font-weight:400;font-family:'Liberation Sans', sans-serif;">55866</div>
<div class="t" style="right:232.00px;top:290.32px;font-size:10.55px;line-height:10.55px;color:#000;font-weight:400;font-family:'Liberation Sans', sans-serif;">39738</div>
<div class="t" style="left:39.70px;top:307.37px;font-size:10.55px;line-height:10.55px;color:#2160d2;font-weight:400;font-family:'Liberation Sans', sans-serif;text-decoration:underline;text-underline-offset:1.3px">lozierinstitute.org</div>
<div class="t" style="left:359.30px;top:307.37px;font-size:10.55px;line-height:10.55px;color:#000;font-weight:400;font-family:'Liberation Sans', sans-serif;">Included</div>
<div class="t" style="right:394.30px;top:307.37px;font-size:10.55px;line-height:10.55px;color:#000;font-weight:400;font-family:'Liberation Sans', sans-serif;">70</div>
<div class="t" style="right:313.30px;top:307.37px;font-size:10.55px;line-height:10.55px;color:#000;font-weight:400;font-family:'Liberation Sans', sans-serif;">25853</div>
<div class="t" style="right:232.00px;top:307.37px;font-size:10.55px;line-height:10.55px;color:#000;font-weight:400;font-family:'Liberation Sans', sans-serif;">20034</div>
<div class="t" style="left:39.70px;top:324.42px;font-size:10.55px;line-height:10.55px;color:#2160d2;font-weight:400;font-family:'Liberation Sans', sans-serif;text-decoration:underline;text-underline-offset:1.3px">recruit-holdings.com</div>
<div class="t" style="left:359.30px;top:324.42px;font-size:10.55px;line-height:10.55px;color:#000;font-weight:400;font-family:'Liberation Sans', sans-serif;">Included</div>
<div class="t" style="right:394.30px;top:324.42px;font-size:10.55px;line-height:10.55px;color:#000;font-weight:400;font-family:'Liberation Sans', sans-serif;">70</div>
<div class="t" style="right:313.30px;top:324.42px;font-size:10.55px;line-height:10.55px;color:#000;font-weight:400;font-family:'Liberation Sans', sans-serif;">13620</div>
<div class="t" style="right:232.00px;top:324.42px;font-size:10.55px;line-height:10.55px;color:#000;font-weight:400;font-family:'Liberation Sans', sans-serif;">2974</div>
<div class="t" style="left:39.70px;top:341.47px;font-size:10.55px;line-height:10.55px;color:#2160d2;font-weight:400;font-family:'Liberation Sans', sans-serif;text-decoration:underline;text-underline-offset:1.3px">europages.co.uk</div>
<div class="t" style="left:359.30px;top:341.47px;font-size:10.55px;line-height:10.55px;color:#000;font-weight:400;font-family:'Liberation Sans', sans-serif;">Included</div>
<div class="t" style="right:394.30px;top:341.47px;font-size:10.55px;line-height:10.55px;color:#000;font-weight:400;font-family:'Liberation Sans', sans-serif;">70</div>
<div class="t" style="right:313.30px;top:341.47px;font-size:10.55px;line-height:10.55px;color:#000;font-weight:400;font-family:'Liberation Sans', sans-serif;">5273</div>
<div class="t" style="right:232.00px;top:341.47px;font-size:10.55px;line-height:10.55px;color:#000;font-weight:400;font-family:'Liberation Sans', sans-serif;">21681</div>
<div class="t" style="left:39.70px;top:358.52px;font-size:10.55px;line-height:10.55px;color:#000;font-weight:400;font-family:'Liberation Sans', sans-serif;">gabriel-zucman.eu</div>
<div class="t" style="left:359.30px;top:358.52px;font-size:10.55px;line-height:10.55px;color:#000;font-weight:400;font-family:'Liberation Sans', sans-serif;">Included</div>
<div class="t" style="right:394.30px;top:358.52px;font-size:10.55px;line-height:10.55px;color:#000;font-weight:400;font-family:'Liberation Sans', sans-serif;">70</div>
<div class="t" style="right:313.30px;top:358.52px;font-size:10.55px;line-height:10.55px;color:#000;font-weight:400;font-family:'Liberation Sans', sans-serif;">1014</div>
<div class="t" style="right:232.00px;top:358.52px;font-size:10.55px;line-height:10.55px;color:#000;font-weight:400;font-family:'Liberation Sans', sans-serif;">733</div>
<div class="t" style="left:39.70px;top:375.57px;font-size:10.55px;line-height:10.55px;color:#2160d2;font-weight:400;font-family:'Liberation Sans', sans-serif;text-decoration:underline;text-underline-offset:1.3px">thecurrent.com</div>
<div class="t" style="left:359.30px;top:375.57px;font-size:10.55px;line-height:10.55px;color:#000;font-weight:400;font-family:'Liberation Sans', sans-serif;">Included</div>
<div class="t" style="right:394.30px;top:375.57px;font-size:10.55px;line-height:10.55px;color:#000;font-weight:400;font-family:'Liberation Sans', sans-serif;">70</div>
<div class="t" style="right:313.30px;top:375.57px;font-size:10.55px;line-height:10.55px;color:#000;font-weight:400;font-family:'Liberation Sans', sans-serif;">2909</div>
<div class="t" style="right:232.00px;top:375.57px;font-size:10.55px;line-height:10.55px;color:#000;font-weight:400;font-family:'Liberation Sans', sans-serif;">9486</div>
<div class="t" style="left:39.70px;top:392.62px;font-size:10.55px;line-height:10.55px;color:#2160d2;font-weight:400;font-family:'Liberation Sans', sans-serif;text-decoration:underline;text-underline-offset:1.3px">sovacincau.com</div>
<div class="t" style="left:359.30px;top:392.62px;font-size:10.55px;line-height:10.55px;color:#000;font-weight:400;font-family:'Liberation Sans', sans-serif;">Included</div>
<div class="t" style="right:394.30px;top:392.62px;font-size:10.55px;line-height:10.55px;color:#000;font-weight:400;font-family:'Liberation Sans', sans-serif;">70</div>
<div class="t" style="right:313.30px;top:392.62px;font-size:10.55px;line-height:10.55px;color:#000;font-weight:400;font-family:'Liberation Sans', sans-serif;">103202</div>
<div class="t" style="right:232.00px;top:392.62px;font-size:10.55px;line-height:10.55px;color:#000;font-weight:400;font-family:'Liberation Sans', sans-serif;">84611</div>
<svg class="i" style="left:36.5px;top:166.2px;width:224.8px;height:18.3px" viewBox="0 0 224.8 18.3"><rect x="1.05" y="1.05" width="222.70000000000002" height="16.2" fill="none" stroke="#f59a1b" stroke-width="2.1" stroke-dasharray="3.7 1.9"/></svg>
<svg class="i" style="left:356px;top:149px;width:182px;height:17px" viewBox="0 0 182 17"><rect x="0" y="0" width="181.5" height="1" fill="#3b78e7"/><path d="M0 1.75H181" stroke="#8a2bd0" stroke-width="1.5" stroke-dasharray="4 2"/><path d="M1.2 1V16.5" stroke="#8a2bd0" stroke-width="1.6" stroke-dasharray="4 2"/><path d="M180.2 1V16.5" stroke="#8a2bd0" stroke-width="1.6" stroke-dasharray="4 2"/></svg>
<div class="r" style="left:355.8px;top:165.6px;width:656px;height:51.5px;border:2px solid #1f6fe5;background:#fff;box-shadow:0 0 1px #6fa0f0"></div>
<div class="t" style="left:359.60px;top:171.28px;font-size:10.2px;line-height:10.2px;color:#37393b;font-weight:400;font-family:'Liberation Mono', monospace;letter-spacing:-0.360px"><span style="color:#37393b">=IF(LEN(SUBSTITUTE(LEFT(</span><span style="color:#f59e31">A3</span><span style="color:#37393b">,FIND(</span><span style="color:#2a9a48">"."</span><span style="color:#37393b">,</span><span style="color:#f59e31">A3</span><span style="color:#37393b">)-</span><span style="color:#1a73e8">1</span><span style="color:#37393b">),</span><span style="color:#2a9a48">"-"</span><span style="color:#37393b">,</span><span style="color:#2a9a48">""</span><span style="color:#37393b">))&lt;</span><span style="color:#1a73e8">7</span><span style="color:#37393b">,</span><span style="color:#2a9a48">"Excluded (Short Domain)"</span><span style="color:#37393b">,</span><span style="color:#9334e6;text-decoration:underline">C2</span></div>
<div class="t" style="left:359.60px;top:183.38px;font-size:10.2px;line-height:10.2px;color:#37393b;font-weight:400;font-family:'Liberation Mono', monospace;letter-spacing:-0.360px"><span style="color:#37393b">IF(OR(ISNUMBER(SEARCH(</span><span style="color:#2a9a48">"forum"</span><span style="color:#37393b">,</span><span style="color:#f59e31">A3</span><span style="color:#37393b">)),ISNUMBER(SEARCH(</span><span style="color:#2a9a48">"board"</span><span style="color:#37393b">,</span><span style="color:#f59e31">A3</span><span style="color:#37393b">)),ISNUMBER(SEARCH(</span><span style="color:#2a9a48">"chat"</span><span style="color:#37393b">,</span><span style="color:#f59e31">A3</span><span style="color:#37393b">))),</span><span style="color:#2a9a48">"Excluded (Forum)"</span><span style="color:#37393b">,</span></div>
<div class="t" style="left:359.60px;top:195.48px;font-size:10.2px;line-height:10.2px;color:#37393b;font-weight:400;font-family:'Liberation Mono', monospace;letter-spacing:-0.360px"><span style="color:#37393b">IF(OR(ISNUMBER(SEARCH(</span><span style="color:#2a9a48">"casino"</span><span style="color:#37393b">,</span><span style="color:#f59e31">A3</span><span style="color:#37393b">)),ISNUMBER(SEARCH(</span><span style="color:#2a9a48">"bet"</span><span style="color:#37393b">,</span><span style="color:#f59e31">A3</span><span style="color:#37393b">)),ISNUMBER(SEARCH(</span><span style="color:#2a9a48">"torrent"</span><span style="color:#37393b">,</span><span style="color:#f59e31">A3</span><span style="color:#37393b">)),ISNUMBER(SEARCH(</span><span style="color:#2a9a48">"do</span></div>
<div class="t" style="left:359.60px;top:207.58px;font-size:10.2px;line-height:10.2px;color:#37393b;font-weight:400;font-family:'Liberation Mono', monospace;letter-spacing:-0.360px"><span style="color:#2a9a48">wnload"</span><span style="color:#37393b">,</span><span style="color:#f59e31">A3</span><span style="color:#37393b">)),ISNUMBER(SEARCH(</span><span style="color:#2a9a48">"adult"</span><span style="color:#37393b">,</span><span style="color:#f59e31">A3</span><span style="color:#37393b">)),ISNUMBER(SEARCH(</span><span style="color:#2a9a48">"proxy"</span><span style="color:#37393b">,</span><span style="color:#f59e31">A3</span><span style="color:#37393b">))),</span><span style="color:#2a9a48">"Excluded (Spammy)"</span><span style="color:#37393b">,</span><span style="color:#2a9a48">"Included"</span><span style="color:#37393b">)))</span></div>
<div class="r" style="left:1016.9px;top:133.7px;width:6.8px;height:20.5px;border-radius:3px;background:#dadce0"></div>
<div class="r" style="left:1016.5px;top:376px;width:7.5px;height:25px;background:#f8f9fa;"></div>
<svg class="i" style="left:1014.20px;top:377.50px;width:12px;height:12px" viewBox="0 0 24 24" fill="#8d9196"><path d="M7 14l5-5 5 5z" /></svg>
<svg class="i" style="left:1014.20px;top:389.30px;width:12px;height:12px" viewBox="0 0 24 24" fill="#8d9196"><path d="M7 10l5 5 5-5z" /></svg>
<div class="r" style="left:1016.3px;top:389px;width:5px;height:1px;background:#7ea6ee;"></div>
<div class="r" style="left:0px;top:402px;width:1024px;height:10px;background:#ffffff;"></div>
<div class="r" style="left:0px;top:402px;width:36.5px;height:10px;background:#f3f3f3;"></div>
<div class="r" style="left:36px;top:402px;width:1px;height:10px;background:#e1e1e1;"></div>
<div class="r" style="left:37px;top:402px;width:979px;height:1px;background:#f1f1f1;"></div>
<div class="r" style="left:991.5px;top:402px;width:1px;height:9px;background:#eceef0;"></div>
<div class="r" style="left:1003.5px;top:402px;width:1px;height:9px;background:#eceef0;"></div>
<div class="r" style="left:1016px;top:402px;width:1px;height:9px;background:#eceef0;"></div>
<svg class="i" style="left:991.20px;top:400.70px;width:12px;height:12px" viewBox="0 0 24 24" fill="#8d9196"><path d="M14 7l-5 5 5 5z" /></svg>
<svg class="i" style="left:1003.80px;top:400.70px;width:12px;height:12px" viewBox="0 0 24 24" fill="#8d9196"><path d="M10 17l5-5-5-5z" /></svg>
<div class="r" style="left:0px;top:412px;width:1024px;height:27px;background:#f9fbfd;"></div>
<div class="r" style="left:0px;top:411px;width:1024px;height:1px;background:#f0f1f3;"></div>
<div class="r" style="left:45.2px;top:426.6px;width:7.8px;height:1.15px;background:#444746;"></div>
<div class="r" style="left:48.5px;top:423.1px;width:1.15px;height:8.2px;background:#444746;"></div>
<div class="r" style="left:75px;top:423.6px;width:11.6px;height:1.15px;background:#444746;"></div>
<div class="r" style="left:75px;top:426.7px;width:11.6px;height:1.15px;background:#444746;"></div>
<div class="r" style="left:75px;top:429.8px;width:11.6px;height:1.15px;background:#444746;"></div>
<div class="r" style="left:105.8px;top:412px;width:105px;height:27px;background:#e1e9f7;"></div>
<div class="t" style="left:116.00px;top:421.52px;font-size:11.5px;line-height:11.5px;color:#0b57d0;font-weight:700;font-family:'Liberation Sans', sans-serif;">Ref Domains</div>
<svg class="i" style="left:192.70px;top:420.50px;width:13px;height:13px" viewBox="0 0 24 24" fill="#0b57d0"><path d="M7 10l5 5 5-5z" /></svg>
<svg class="i" style="left:995.80px;top:422.00px;width:14px;height:14px" viewBox="0 0 24 24" fill="#444746"><path d="M15.41 7.41L14 6l-6 6 6 6 1.41-1.41L10.83 12z" /></svg>
<svg class="i" style="left:0;top:0;width:1024px;height:439px" viewBox="0 0 1024 439">
<path d="M63.8 50.8L104 90.5" stroke="#000" stroke-width="1.5" fill="none"/>
<path d="M109 95L100.1 92.4L105.9 87.3Z" fill="#000"/>
<path d="M516.7 128.2L468 154.4" stroke="#000" stroke-width="1.5" fill="none"/>
<path d="M463.8 157L468.5 150.6L472.3 156.6Z" fill="#000"/>
</svg>
</body></html>
